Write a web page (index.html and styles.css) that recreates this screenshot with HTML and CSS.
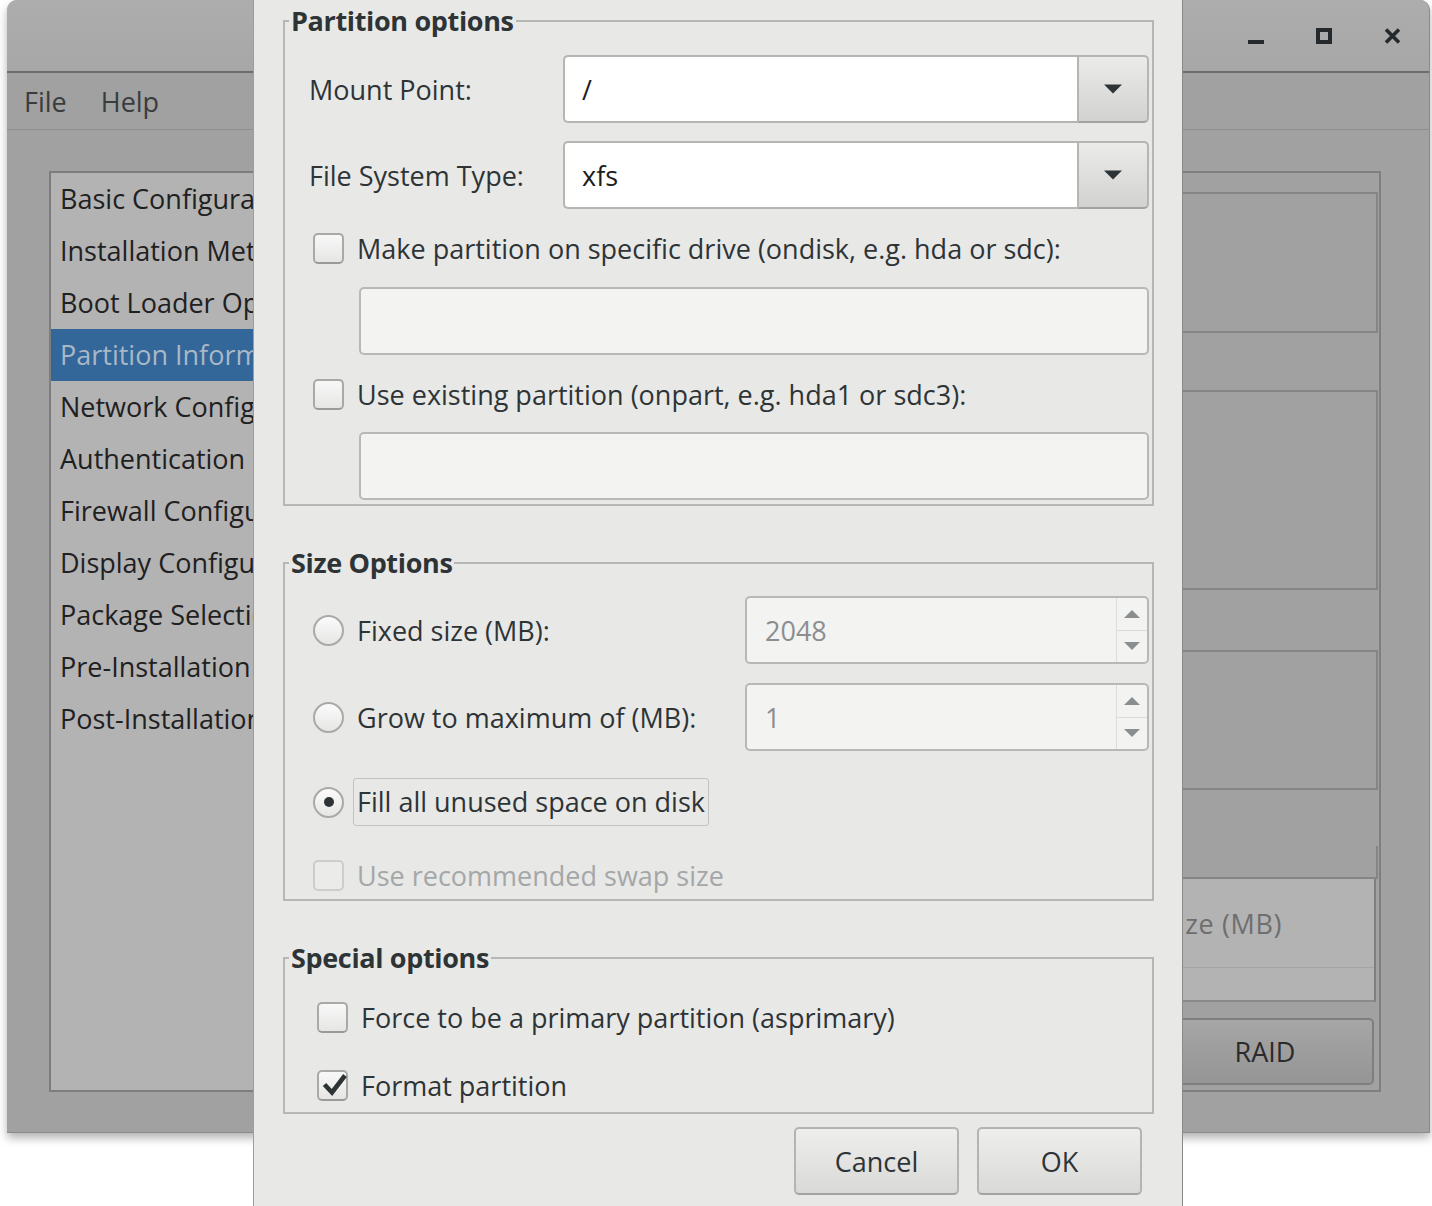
FILE: index.html
```html
<!DOCTYPE html>
<html lang="en">
<head>
<meta charset="utf-8">
<title>Kickstart Configurator - Partition Options</title>
<link rel="stylesheet" href="styles.css">
</head>
<body>
<div class="desktop">
  <div class="app-window">
    <div class="titlebar">
      <svg class="wm-icon" width="16" height="16" viewBox="0 0 16 16"><rect x="0" y="12" width="16" height="4" fill="#25292b"/></svg>
      <svg class="wm-icon" width="16" height="16" viewBox="0 0 16 16"><rect x="2" y="2" width="12" height="12" fill="none" stroke="#25292b" stroke-width="4"/></svg>
      <svg class="wm-icon" width="17" height="16" viewBox="0 0 17 16"><path d="M2 1.5l13 13M15 1.5l-13 13" stroke="#25292b" stroke-width="3.6" fill="none"/></svg>
    </div>
    <div class="menubar">
      <span class="menu-item">File</span>
      <span class="menu-item">Help</span>
    </div>
    <div class="app-body">
      <ul class="nav-list">
        <li>Basic Configuration</li>
        <li>Installation Method</li>
        <li>Boot Loader Options</li>
        <li class="selected">Partition Information</li>
        <li>Network Configuration</li>
        <li>Authentication</li>
        <li>Firewall Configuration</li>
        <li>Display Configuration</li>
        <li>Package Selection</li>
        <li>Pre-Installation Script</li>
        <li>Post-Installation Script</li>
      </ul>
      <div class="main-panel">
        <div class="mp-strip mp-h19"></div>
        <div class="mp-box mp-h141"></div>
        <div class="mp-strip mp-h57"></div>
        <div class="mp-box mp-h200"></div>
        <div class="mp-strip mp-h60"></div>
        <div class="mp-box mp-h140"></div>
        <div class="mp-strip mp-h56"></div>
        <div class="mp-box mp-h33"></div>
        <div class="mp-table">
          <div class="mp-table-head">
            <span class="mp-col">Type</span>
            <span class="mp-col">Format</span>
            <span class="mp-col mp-col-size">Size (MB)</span>
          </div>
          <div class="mp-table-row"></div>
        </div>
        <div class="mp-actions">
          <span class="mp-btn">Add</span>
          <span class="mp-btn">Edit</span>
          <span class="mp-btn">Delete</span>
          <span class="mp-btn">RAID</span>
        </div>
      </div>
    </div>
  </div>

  <div class="dialog">
    <fieldset class="group group-partition">
      <legend>Partition options</legend>
      <div class="group-body">
        <div class="form-grid">
          <label class="field-label">Mount Point:</label>
          <div class="combo">
            <span class="combo-entry">/</span>
            <span class="combo-btn"><svg width="20" height="10" viewBox="0 0 20 10"><path d="M1 0.5h18l-9 9z" fill="#2e3436"/></svg></span>
          </div>
          <label class="field-label">File System Type:</label>
          <div class="combo">
            <span class="combo-entry">xfs</span>
            <span class="combo-btn"><svg width="20" height="10" viewBox="0 0 20 10"><path d="M1 0.5h18l-9 9z" fill="#2e3436"/></svg></span>
          </div>
        </div>
        <div class="check-row row-ondisk">
          <span class="checkbox"></span>
          <span class="check-label">Make partition on specific drive (ondisk, e.g. hda or sdc):</span>
        </div>
        <div class="entry entry-disabled entry-ondisk"></div>
        <div class="check-row row-onpart">
          <span class="checkbox"></span>
          <span class="check-label">Use existing partition (onpart, e.g. hda1 or sdc3):</span>
        </div>
        <div class="entry entry-disabled entry-onpart"></div>
      </div>
    </fieldset>

    <fieldset class="group group-size">
      <legend>Size Options</legend>
      <div class="group-body">
        <div class="size-row row-fixed">
          <div class="radio-wrap">
            <span class="radio"></span>
            <span class="check-label">Fixed size (MB):</span>
          </div>
          <div class="spin">
            <span class="spin-value">2048</span>
            <span class="spin-buttons">
              <span class="spin-btn"><svg width="16" height="8" viewBox="0 0 16 8"><path d="M0 8h16L8 0z" fill="#8b8e8f"/></svg></span>
              <span class="spin-btn spin-btn-down"><svg width="16" height="8" viewBox="0 0 16 8"><path d="M0 0h16L8 8z" fill="#8b8e8f"/></svg></span>
            </span>
          </div>
        </div>
        <div class="size-row row-grow">
          <div class="radio-wrap">
            <span class="radio"></span>
            <span class="check-label">Grow to maximum of (MB):</span>
          </div>
          <div class="spin">
            <span class="spin-value">1</span>
            <span class="spin-buttons">
              <span class="spin-btn"><svg width="16" height="8" viewBox="0 0 16 8"><path d="M0 8h16L8 0z" fill="#8b8e8f"/></svg></span>
              <span class="spin-btn spin-btn-down"><svg width="16" height="8" viewBox="0 0 16 8"><path d="M0 0h16L8 8z" fill="#8b8e8f"/></svg></span>
            </span>
          </div>
        </div>
        <div class="size-row row-fill">
          <div class="radio-wrap">
            <span class="radio radio-checked"><span class="radio-dot"></span></span>
            <span class="check-label focus-label">Fill all unused space on disk</span>
          </div>
        </div>
        <div class="check-row row-swap">
          <span class="checkbox checkbox-disabled"></span>
          <span class="check-label label-disabled">Use recommended swap size</span>
        </div>
      </div>
    </fieldset>

    <fieldset class="group group-special">
      <legend>Special options</legend>
      <div class="group-body">
        <div class="check-row">
          <span class="checkbox"></span>
          <span class="check-label">Force to be a primary partition (asprimary)</span>
        </div>
        <div class="check-row row-format">
          <span class="checkbox"><svg width="27" height="27" viewBox="2 2 27 27"><path d="M7.5 14.5l7.5 8L28 5.5" fill="none" stroke="#2e3436" stroke-width="4.6"/></svg></span>
          <span class="check-label">Format partition</span>
        </div>
      </div>
    </fieldset>

    <div class="dialog-actions">
      <span class="btn">Cancel</span>
      <span class="btn">OK</span>
    </div>
  </div>
</div>
</body>
</html>
```

FILE: styles.css
```css
* { box-sizing: border-box; }

html, body {
  margin: 0;
  padding: 0;
}

body {
  background: #ffffff;
  font-family: "Open Sans", "Noto Sans", sans-serif;
  font-size: 27px;
  color: #2e3436;
}

.desktop {
  position: relative;
  width: 1432px;
  height: 1206px;
  overflow: hidden;
}

/* ---------- background application window ---------- */
.app-window {
  position: absolute;
  left: 7px;
  top: 0;
  width: 1423px;
  height: 1133px;
  background: #a1a1a1;
  border-right: 1px solid #8a8a8a;
  border-bottom: 1px solid #8a8a8a;
  border-radius: 10px 10px 0 0;
  box-shadow: 0 5px 10px rgba(0, 0, 0, 0.3);
  display: flex;
  flex-direction: column;
}

.titlebar {
  flex: none;
  height: 73px;
  background: linear-gradient(#adadad, #a7a7a7);
  border-bottom: 2px solid #6d6d6d;
  border-radius: 10px 10px 0 0;
  display: flex;
  align-items: center;
  justify-content: flex-end;
  gap: 52px;
  padding-right: 28px;
}

.wm-icon { display: block; }

.menubar {
  flex: none;
  height: 57px;
  border-bottom: 1px solid #8e8e8e;
  display: flex;
  align-items: center;
  gap: 34px;
  padding-left: 17px;
  color: #3a3c3d;
}

.app-body {
  flex: 1;
  display: flex;
  padding: 41px 48px 40px 42px;
  min-height: 0;
}

.nav-list {
  flex: none;
  width: 300px;
  margin: 0;
  padding: 0;
  list-style: none;
  background: #b3b3b3;
  border: 2px solid #7d7d7d;
  overflow: hidden;
}

.nav-list li {
  height: 52px;
  line-height: 52px;
  padding-left: 9px;
  white-space: nowrap;
  color: #1f2021;
}

.nav-list li.selected {
  background: #336699;
  color: #a9b8c7;
}

.main-panel {
  flex: 1;
  min-width: 0;
  overflow: hidden;
  margin-left: 20px;
  border: 2px solid #7f7f7f;
  display: flex;
  flex-direction: column;
  padding-right: 1px;
}

.mp-strip { flex: none; }
.mp-box {
  flex: none;
  border-top: 2px solid #858585;
  border-bottom: 2px solid #858585;
  border-right: 2px solid #858585;
}
.mp-h19 { height: 19px; }
.mp-h141 { height: 141px; }
.mp-h57 { height: 57px; }
.mp-h200 { height: 200px; }
.mp-h60 { height: 60px; }
.mp-h140 { height: 140px; }
.mp-h56 { height: 56px; }
.mp-h33 { height: 33px; border-top: none; }

.mp-table {
  flex: none;
  height: 123px;
  margin-right: 2px;
  background: #b3b3b3;
  border-right: 2px solid #7f7f7f;
  border-bottom: 2px solid #8a8a8a;
  display: flex;
  flex-direction: column;
}

.mp-table-head {
  height: 89px;
  border-bottom: 1px solid #a4a4a4;
  display: flex;
  align-items: center;
  justify-content: flex-end;
  gap: 40px;
  padding-right: 92px;
  color: #6e6e6e;
  white-space: nowrap;
  overflow: hidden;
}

.mp-col-size { letter-spacing: 0.6px; }

.mp-table-row { flex: 1; }

.mp-actions {
  flex: none;
  margin-top: 16px;
  height: 67px;
  display: flex;
  justify-content: flex-end;
  gap: 18px;
  padding-right: 4px;
  overflow: hidden;
}

.mp-btn {
  flex: none;
  width: 218px;
  height: 67px;
  border: 2px solid #7f7f7f;
  border-radius: 5px;
  background: linear-gradient(#a6a6a6, #959595);
  display: flex;
  align-items: center;
  justify-content: center;
  color: #2a2b2c;
}

/* ---------- modal dialog ---------- */
.dialog {
  position: absolute;
  left: 253px;
  top: 0;
  width: 930px;
  height: 1206px;
  background: #e8e8e7;
  border-left: 1px solid #9c9c9c;
  border-right: 1px solid #8a8a8a;
  padding: 6px 28px 0 29px;
}

.group {
  margin: 0;
  min-width: 0;
  border: 2px solid #b6b6b4;
  padding: 0 3px 0 0;
}

.group legend {
  font-weight: 700;
  line-height: 30px;
  padding: 0 2px;
  margin-left: 4px;
  letter-spacing: -0.35px;
  color: #2e3436;
}

.group-partition { padding-top: 19px; padding-bottom: 4px; }
.group-partition .group-body { padding-left: 24px; }

.group-size { margin-top: 42px; padding-top: 18px; padding-bottom: 8px; }
.group-size .group-body { padding-left: 28px; }

.group-special { margin-top: 42px; padding-top: 28px; padding-bottom: 11px; }
.group-special .group-body { padding-left: 32px; }

.form-grid {
  display: grid;
  grid-template-columns: 254px 1fr;
  row-gap: 18px;
  align-items: center;
}

.field-label { white-space: nowrap; }

.combo {
  height: 68px;
  display: flex;
}

.combo-entry {
  flex: 1;
  background: #ffffff;
  border: 2px solid #b5b5b2;
  border-right: none;
  border-radius: 5px 0 0 5px;
  padding-left: 17px;
  display: flex;
  align-items: center;
  color: #1b1c1d;
}

.combo-btn {
  flex: none;
  width: 72px;
  background: linear-gradient(#ebebea, #d2d2d0);
  border: 2px solid #b5b5b2;
  border-bottom-color: #a2a29e;
  border-radius: 0 5px 5px 0;
  display: flex;
  align-items: center;
  justify-content: center;
}

.check-row {
  height: 32px;
  display: flex;
  align-items: center;
  gap: 13px;
  white-space: nowrap;
}

.group-partition .check-row { margin-left: 4px; }
.row-ondisk { margin-top: 23px; }
.row-onpart { margin-top: 23px; }

.checkbox {
  flex: none;
  width: 31px;
  height: 31px;
  border: 2px solid #a9a9a7;
  border-bottom-color: #9a9a98;
  border-radius: 5px;
  background: linear-gradient(#f8f8f8, #e6e6e5);
  display: flex;
  align-items: center;
  justify-content: center;
}

.checkbox svg { display: block; overflow: visible; }

.checkbox-disabled {
  border-color: #cdcdcb;
  background: #ebebea;
}

.label-disabled { color: #a4a7a8; }

.entry {
  height: 68px;
  margin-left: 50px;
  border: 2px solid #b8b8b5;
  border-radius: 5px;
}

.entry-disabled { background: #f3f3f2; }
.entry-ondisk { margin-top: 23px; }
.entry-onpart { margin-top: 22px; }

.size-row {
  height: 68px;
  display: flex;
  align-items: center;
  justify-content: space-between;
}

.row-grow { margin-top: 19px; }
.row-fill { margin-top: 17px; }
.row-swap { margin-top: 23px; }

.radio-wrap {
  display: flex;
  align-items: center;
  gap: 13px;
  white-space: nowrap;
}

.radio {
  flex: none;
  width: 31px;
  height: 31px;
  border: 2px solid #a9a9a7;
  border-radius: 50%;
  background: linear-gradient(#fbfbfb, #e6e6e5);
  display: flex;
  align-items: center;
  justify-content: center;
}

.radio-dot {
  width: 10px;
  height: 10px;
  border-radius: 50%;
  background: #2e3436;
}

.focus-label {
  margin-left: -4px;
  padding: 8px 3px;
  line-height: 30px;
  border: 1px solid #c2c2c0;
  border-radius: 3px;
}

.spin {
  flex: none;
  width: 404px;
  height: 68px;
  background: #f3f3f2;
  border: 2px solid #b8b8b5;
  border-radius: 5px;
  display: flex;
}

.spin-value {
  flex: 1;
  padding-left: 18px;
  display: flex;
  align-items: center;
  color: #8b8e8f;
}

.spin-buttons {
  flex: none;
  width: 31px;
  border-left: 1px solid #dcdcda;
  display: flex;
  flex-direction: column;
}

.spin-btn {
  flex: 1;
  display: flex;
  align-items: center;
  justify-content: center;
}

.spin-btn-down { border-top: 1px solid #dcdcda; }

.row-format { margin-top: 36px; }

.dialog-actions {
  margin-top: 13px;
  display: flex;
  justify-content: flex-end;
  gap: 18px;
  padding-right: 12px;
}

.btn {
  width: 165px;
  height: 68px;
  border: 2px solid #b4b4b2;
  border-bottom-color: #a3a3a1;
  border-radius: 5px;
  background: linear-gradient(#eeeeed, #d9d9d7);
  display: flex;
  align-items: center;
  justify-content: center;
  color: #2e3436;
}
```
